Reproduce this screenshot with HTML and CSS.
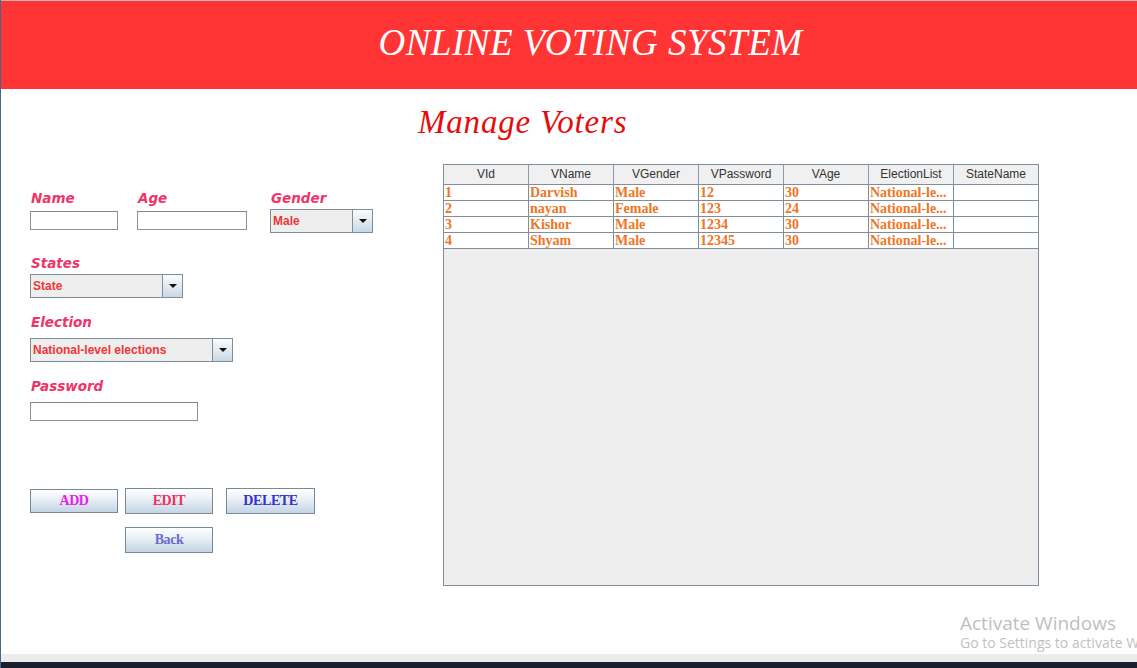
FILE: index.html
```html
<!DOCTYPE html>
<html lang="en">
<head>
<meta charset="utf-8">
<title>Online Voting System - Manage Voters</title>
<link rel="stylesheet" href="styles.css">
</head>
<body>
<div class="screen">
  <header class="banner"><h1>ONLINE VOTING SYSTEM</h1></header>
  <main class="window">
    <h2 class="page-title">Manage Voters</h2>
    <div class="workspace">
      <form class="form">
        <div class="row-top">
          <div class="field f-name">
            <label class="lbl">Name</label>
            <div class="text top5"></div>
          </div>
          <div class="field f-age">
            <label class="lbl">Age</label>
            <div class="text top5"></div>
          </div>
          <div class="field f-gender">
            <label class="lbl">Gender</label>
            <div class="combo top3"><span class="combo-value">Male</span><span class="combo-arrow"></span></div>
          </div>
        </div>
        <div class="field g-states">
          <label class="lbl">States</label>
          <div class="combo top3"><span class="combo-value">State</span><span class="combo-arrow"></span></div>
        </div>
        <div class="field g-election">
          <label class="lbl">Election</label>
          <div class="combo top8"><span class="combo-value">National-level elections</span><span class="combo-arrow"></span></div>
        </div>
        <div class="field g-password">
          <label class="lbl">Password</label>
          <div class="text top8"></div>
        </div>
        <div class="btn-row first">
          <button type="button" class="btn b-add">ADD</button>
          <button type="button" class="btn b-edit">EDIT</button>
          <button type="button" class="btn b-delete">DELETE</button>
        </div>
        <div class="btn-row second">
          <button type="button" class="btn b-back">Back</button>
        </div>
      </form>
      <section class="grid-wrap">
        <div class="grid head">
          <div class="th">VId</div><div class="th">VName</div><div class="th">VGender</div><div class="th">VPassword</div><div class="th">VAge</div><div class="th">ElectionList</div><div class="th">StateName</div>
        </div>
        <div class="grid row">
          <div class="td">1</div><div class="td">Darvish</div><div class="td">Male</div><div class="td">12</div><div class="td">30</div><div class="td">National-le...</div><div class="td"></div>
        </div>
        <div class="grid row">
          <div class="td">2</div><div class="td">nayan</div><div class="td">Female</div><div class="td">123</div><div class="td">24</div><div class="td">National-le...</div><div class="td"></div>
        </div>
        <div class="grid row">
          <div class="td">3</div><div class="td">Kishor</div><div class="td">Male</div><div class="td">1234</div><div class="td">30</div><div class="td">National-le...</div><div class="td"></div>
        </div>
        <div class="grid row">
          <div class="td">4</div><div class="td">Shyam</div><div class="td">Male</div><div class="td">12345</div><div class="td">30</div><div class="td">National-le...</div><div class="td"></div>
        </div>
      </section>
    </div>
    <div class="watermark">
      <div class="wm1">Activate Windows</div>
      <div class="wm2">Go to Settings to activate W</div>
    </div>
  </main>
  <div class="taskstrip"></div>
  <div class="desktop"></div>
</div>
</body>
</html>
```

FILE: styles.css
```css
* { box-sizing: border-box; }

html, body {
  margin: 0;
  padding: 0;
  background: #1a202b;
}

.screen {
  width: 1137px;
  height: 668px;
  border-left: 1px solid #3f6a8f;
  display: flex;
  flex-direction: column;
  overflow: hidden;
}

.banner {
  height: 89px;
  flex: none;
  border-top: 1px solid #c4b4b4;
  background: #ff3434;
  display: flex;
  justify-content: center;
  align-items: flex-start;
  padding: 20px 0 0 43px;
}

.banner h1 {
  margin: 0;
  font: italic 400 37px/44px "Liberation Serif", serif;
  letter-spacing: 0.5px;
  color: #ffffff;
}

.window {
  height: 565px;
  flex: none;
  background: #ffffff;
  position: relative;
  overflow: hidden;
}

.page-title {
  margin: 13px 0 0;
  padding-left: 417px;
  height: 39px;
  font: italic 400 33px/40px "Liberation Serif", serif;
  letter-spacing: 0.8px;
  color: #e60c0c;
}

.workspace {
  display: flex;
  align-items: flex-start;
}

.form {
  margin: 0;
  width: 442px;
  flex: none;
  padding: 49px 0 0 29px;
  display: flex;
  flex-direction: column;
  align-items: flex-start;
}

.row-top {
  display: flex;
  align-items: flex-start;
}

.field {
  display: flex;
  flex-direction: column;
}

.f-name { width: 88px; margin-right: 19px; }
.f-age { width: 110px; margin-right: 23px; }
.f-gender { width: 103px; }

.g-states { margin-top: 22px; width: 153px; }
.g-election { margin-top: 16px; width: 203px; }
.g-password { margin-top: 16px; width: 168px; }

.lbl {
  display: block;
  height: 16px;
  padding-left: 1px;
  font: italic 700 13.5px/16px "DejaVu Sans", sans-serif;
  color: #ef3467;
  white-space: nowrap;
}

.text {
  height: 19px;
  border: 1px solid #8a949e;
  border-top-color: #7d8792;
  background: #ffffff;
}

.combo {
  height: 24px;
  border: 1px solid #7e8d9c;
  background: #eeeeee;
  display: flex;
}

.top3 { margin-top: 3px; }
.top5 { margin-top: 5px; }
.top8 { margin-top: 8px; }

.combo-value {
  flex: 1;
  padding-left: 2px;
  font: 700 12px/22px "Liberation Sans", Arial, sans-serif;
  color: #f03535;
  white-space: nowrap;
  overflow: hidden;
}

.combo-arrow {
  width: 20px;
  flex: none;
  border-left: 1px solid #7e8d9c;
  background: linear-gradient(#fbfcfd, #c9d8e6);
  display: flex;
  align-items: center;
  justify-content: center;
}

.combo-arrow::after {
  content: "";
  width: 0;
  height: 0;
  border-left: 4.5px solid transparent;
  border-right: 4.5px solid transparent;
  border-top: 4.5px solid #111111;
}

.btn-row {
  display: flex;
  align-items: flex-start;
}

.btn-row.first { margin-top: 67px; }
.btn-row.second { margin-top: 13px; padding-left: 95px; }

.btn {
  width: 88px;
  height: 26px;
  margin: 0;
  padding: 0;
  border: 1px solid #7a8897;
  border-radius: 0;
  background: linear-gradient(#ffffff 0%, #eef3f8 35%, #c3d4e4 100%);
  font: 700 14px/24px "Liberation Serif", serif;
  letter-spacing: -0.4px;
  text-align: center;
}

.b-add { height: 24px; margin-top: 1px; color: #e61ee6; line-height: 22px; }
.b-edit { margin-left: 7px; color: #ee3160; }
.b-delete { margin-left: 13px; width: 89px; color: #3232cc; }
.b-back { color: #6a6ad2; }

.grid-wrap {
  margin-top: 23px;
  width: 596px;
  height: 422px;
  flex: none;
  border: 1px solid #7f8e9c;
  background: #eeeeee;
}

.grid {
  display: grid;
  grid-template-columns: repeat(6, 85px) 84px;
}

.th {
  height: 20px;
  border-right: 1px solid #8d9ba8;
  border-bottom: 1px solid #7f8e9c;
  background: #f0f0f0;
  font: 400 12px/19px "Liberation Sans", Arial, sans-serif;
  color: #333333;
  text-align: center;
  white-space: nowrap;
}

.td {
  height: 16px;
  border-right: 1px solid #7f8e9c;
  border-bottom: 1px solid #7f8e9c;
  background: #ffffff;
  padding-left: 1px;
  font: 700 14px/15px "Liberation Serif", serif;
  color: #ee7626;
  white-space: nowrap;
  overflow: hidden;
}

.th:last-child,
.td:last-child { border-right: none; }

.watermark {
  position: absolute;
  left: 959px;
  top: 523px;
  color: #bfbfbf;
  font-family: "Open Sans", "Noto Sans", sans-serif;
  white-space: nowrap;
}

.wm1 { font-size: 19px; line-height: 22px; }
.wm2 { font-size: 14px; line-height: 17px; }

.taskstrip {
  height: 8px;
  flex: none;
  background: #ececec;
}

.desktop {
  height: 6px;
  flex: none;
  background: #1a202b;
}
```
